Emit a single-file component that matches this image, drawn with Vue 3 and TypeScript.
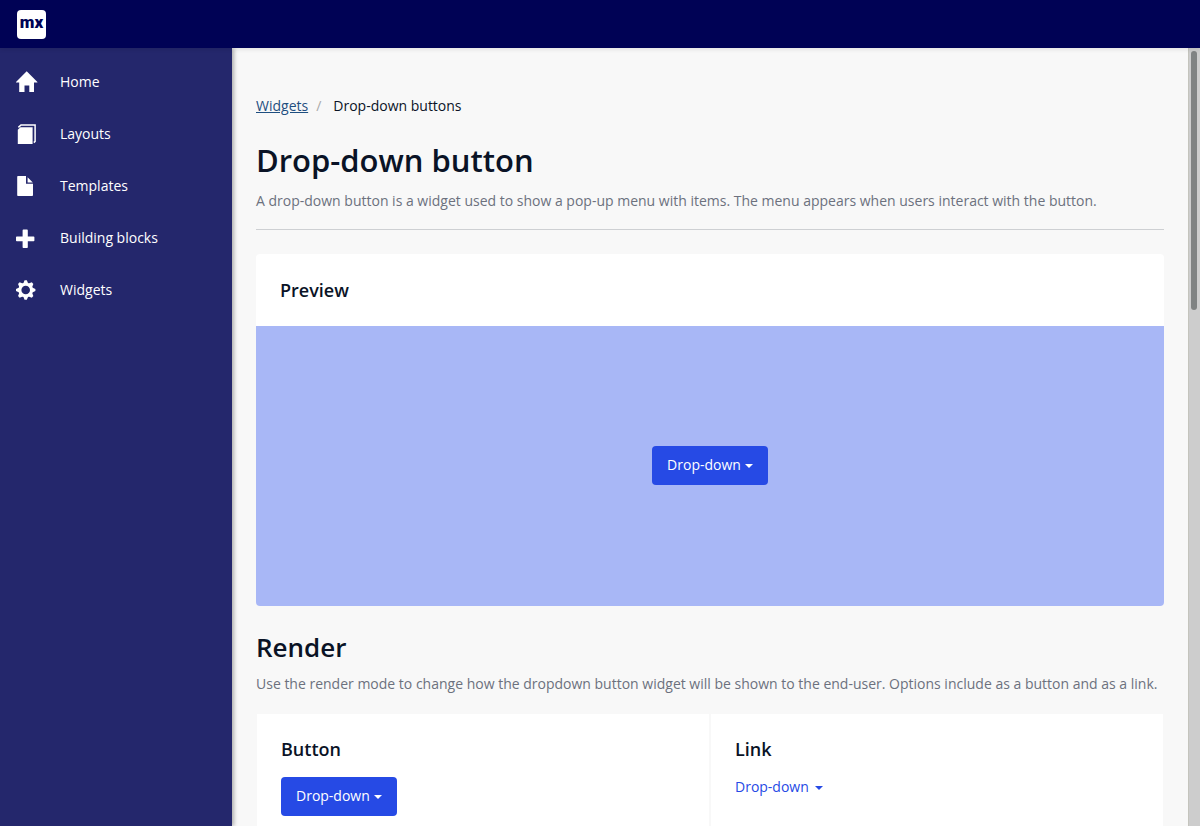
<script setup lang="ts">
interface NavItem {
  label: string
  icon: 'home' | 'layouts' | 'templates' | 'plus' | 'gear'
}

const navItems: NavItem[] = [
  { label: 'Home', icon: 'home' },
  { label: 'Layouts', icon: 'layouts' },
  { label: 'Templates', icon: 'templates' },
  { label: 'Building blocks', icon: 'plus' },
  { label: 'Widgets', icon: 'gear' },
]

const gearTeeth = [0, 45, 90, 135, 180, 225, 270, 315]
</script>

<template>
  <div class="app">
    <header class="topbar">
      <a class="logo" href="#" aria-label="Mendix home">mx</a>
    </header>
    <div class="body">
      <nav class="sidebar" aria-label="Main">
        <a v-for="item in navItems" :key="item.label" class="nav-link" href="#">
          <svg class="nav-icon" viewBox="0 0 22 22" aria-hidden="true">
            <path v-if="item.icon === 'home'" d="M10.7 0.2 21.4 10.9V11.4H18V20.9H13.3V14.6H8.5V20.9H3.2V11.4H0V10.9Z" />
            <template v-else-if="item.icon === 'layouts'">
              <path d="M4.4 4.2H16.6V21H1.8V6.8Z" />
              <path d="M2.4 4.4 5 1.9H19.1V18.4L17.8 19.6" fill="none" stroke="#fff" stroke-width="1.5" />
            </template>
            <path v-else-if="item.icon === 'templates'" d="M2 1H10V8.8H17V20.2Q17 21 16 21H2Q1.2 21 1.2 20.2V1.8Q1.2 1 2 1ZM11.6 2.2 16.8 7.4H11.6Z" />
            <path v-else-if="item.icon === 'plus'" d="M7.4 2.6H11Q11.8 2.6 11.8 3.4V9.4H17.6Q18.4 9.4 18.4 10.2V13.4Q18.4 14.2 17.6 14.2H11.8V20.2Q11.8 21 11 21H7.4Q6.6 21 6.6 20.2V14.2H0.8Q0 14.2 0 13.4V10.2Q0 9.4 0.8 9.4H6.6V3.4Q6.6 2.6 7.4 2.6Z" />
            <template v-else>
              <path
                v-for="angle in gearTeeth"
                :key="angle"
                d="M7 5 8.6 1.3H10.8L12.4 5Z"
                :transform="`rotate(${angle} 9.7 11)`"
              />
              <circle cx="9.7" cy="11" r="5.8" fill="none" stroke="#fff" stroke-width="3" />
            </template>
          </svg>
          <span>{{ item.label }}</span>
        </a>
      </nav>

      <main class="content">
        <ol class="breadcrumb">
          <li><a href="#">Widgets</a></li>
          <li class="separator" aria-hidden="true">/</li>
          <li>Drop-down buttons</li>
        </ol>

        <div class="page-head">
          <h1>Drop-down button</h1>
          <p>A drop-down button is a widget used to show a pop-up menu with items. The menu appears when users interact with the button.</p>
        </div>

        <section class="preview">
          <h4>Preview</h4>
          <div class="stage">
            <button class="btn" type="button">Drop-down<span class="caret"></span></button>
          </div>
        </section>

        <section>
          <h2>Render</h2>
          <p>Use the render mode to change how the dropdown button widget will be shown to the end-user. Options include as a button and as a link.</p>
          <div class="cards">
            <div class="card">
              <h4>Button</h4>
              <button class="btn" type="button">Drop-down<span class="caret"></span></button>
            </div>
            <div class="card">
              <h4>Link</h4>
              <a class="link" href="#">Drop-down<span class="caret"></span></a>
            </div>
          </div>
        </section>
      </main>
      <div class="scroll-track" aria-hidden="true"><div class="scroll-thumb"></div></div>
    </div>
  </div>
</template>

<style>
body {
  margin: 0;
}
</style>

<style scoped>
.app {
  display: flex;
  flex-direction: column;
  height: 100vh;
  overflow: hidden;
  background: #f8f8f8;
  color: #0a1326;
  font: 14px/20px "Open Sans", sans-serif;
}
.app * {
  box-sizing: border-box;
}
.topbar {
  display: flex;
  align-items: center;
  flex: none;
  height: 48px;
  padding: 0 17px;
  background: #000255;
  box-shadow: 0 2px 4px rgba(0, 0, 0, 0.08);
  z-index: 1;
}
.logo {
  width: 29px;
  height: 29px;
  border-radius: 4px;
  background: #fff;
  color: #000255;
  font: 900 17px/25px Roboto, sans-serif;
  text-align: center;
  text-decoration: none;
}
.body {
  display: flex;
  flex: 1;
  min-height: 0;
}
.sidebar {
  flex: none;
  width: 232px;
  padding-top: 8px;
  background: #24276c;
  box-shadow: 2px 0 4px rgba(0, 0, 0, 0.3);
}
.nav-link {
  display: flex;
  align-items: center;
  gap: 22px;
  height: 52px;
  padding: 0 16px;
  color: #fff;
  text-decoration: none;
}
.nav-icon {
  flex: none;
  width: 22px;
  height: 22px;
  fill: #fff;
}
.content {
  flex: 1;
  min-width: 0;
  padding: 48px 24px 0;
  overflow: hidden;
}
.breadcrumb {
  display: flex;
  margin: 0 0 24px;
  padding: 0;
  list-style: none;
}
.breadcrumb a {
  color: #1f4f80;
}
.breadcrumb .separator {
  padding: 0 12px 0 8px;
  color: #aaa;
}
h1,
h2,
h4,
p {
  margin: 0;
}
h1,
h2,
h4 {
  font-weight: 600;
}
h1 {
  margin-bottom: 10px;
  font-size: 31px;
  line-height: 41px;
}
h2 {
  margin-bottom: 10px;
  font-size: 26px;
  line-height: 34px;
}
h4 {
  font-size: 18px;
  line-height: 24px;
}
p {
  color: #6c717e;
}
.page-head {
  margin-bottom: 24px;
  padding-bottom: 18px;
  border-bottom: 1px solid #ced0d3;
}
.preview {
  margin-bottom: 24px;
  border-radius: 4px;
  background: #fff;
  overflow: hidden;
}
.preview h4 {
  padding: 24px;
}
.stage {
  display: flex;
  align-items: flex-start;
  justify-content: center;
  padding: 120px 24px 121px;
  background: #a8b7f6;
}
.btn {
  display: inline-flex;
  align-items: center;
  padding: 9px 15px 10px;
  border: 0;
  border-radius: 4px;
  background: #264ae5;
  color: #fff;
  font: inherit;
}
.caret {
  margin: 1px 0 0 4px;
  border: 4px solid transparent;
  border-top-color: currentColor;
  border-bottom: 0;
}
.cards {
  display: grid;
  grid-template-columns: 1fr 1fr;
  gap: 2px;
  margin-top: 20px;
  padding: 0 1px;
}
.card {
  height: 160px;
  padding: 23px 24px;
  background: #fff;
}
.card h4 {
  margin-bottom: 16px;
}
.link {
  display: inline-flex;
  align-items: center;
  color: #264ae5;
  text-decoration: none;
}
.link .caret {
  margin-left: 6px;
}
.scroll-track {
  flex: none;
  width: 12px;
  padding: 3px 2px;
  border-left: 1px solid #c4c4bd;
  background: #cdcdcd;
}
.scroll-thumb {
  width: 6px;
  height: 33.5%;
  border-radius: 3px;
  background: #808383;
}
</style>
